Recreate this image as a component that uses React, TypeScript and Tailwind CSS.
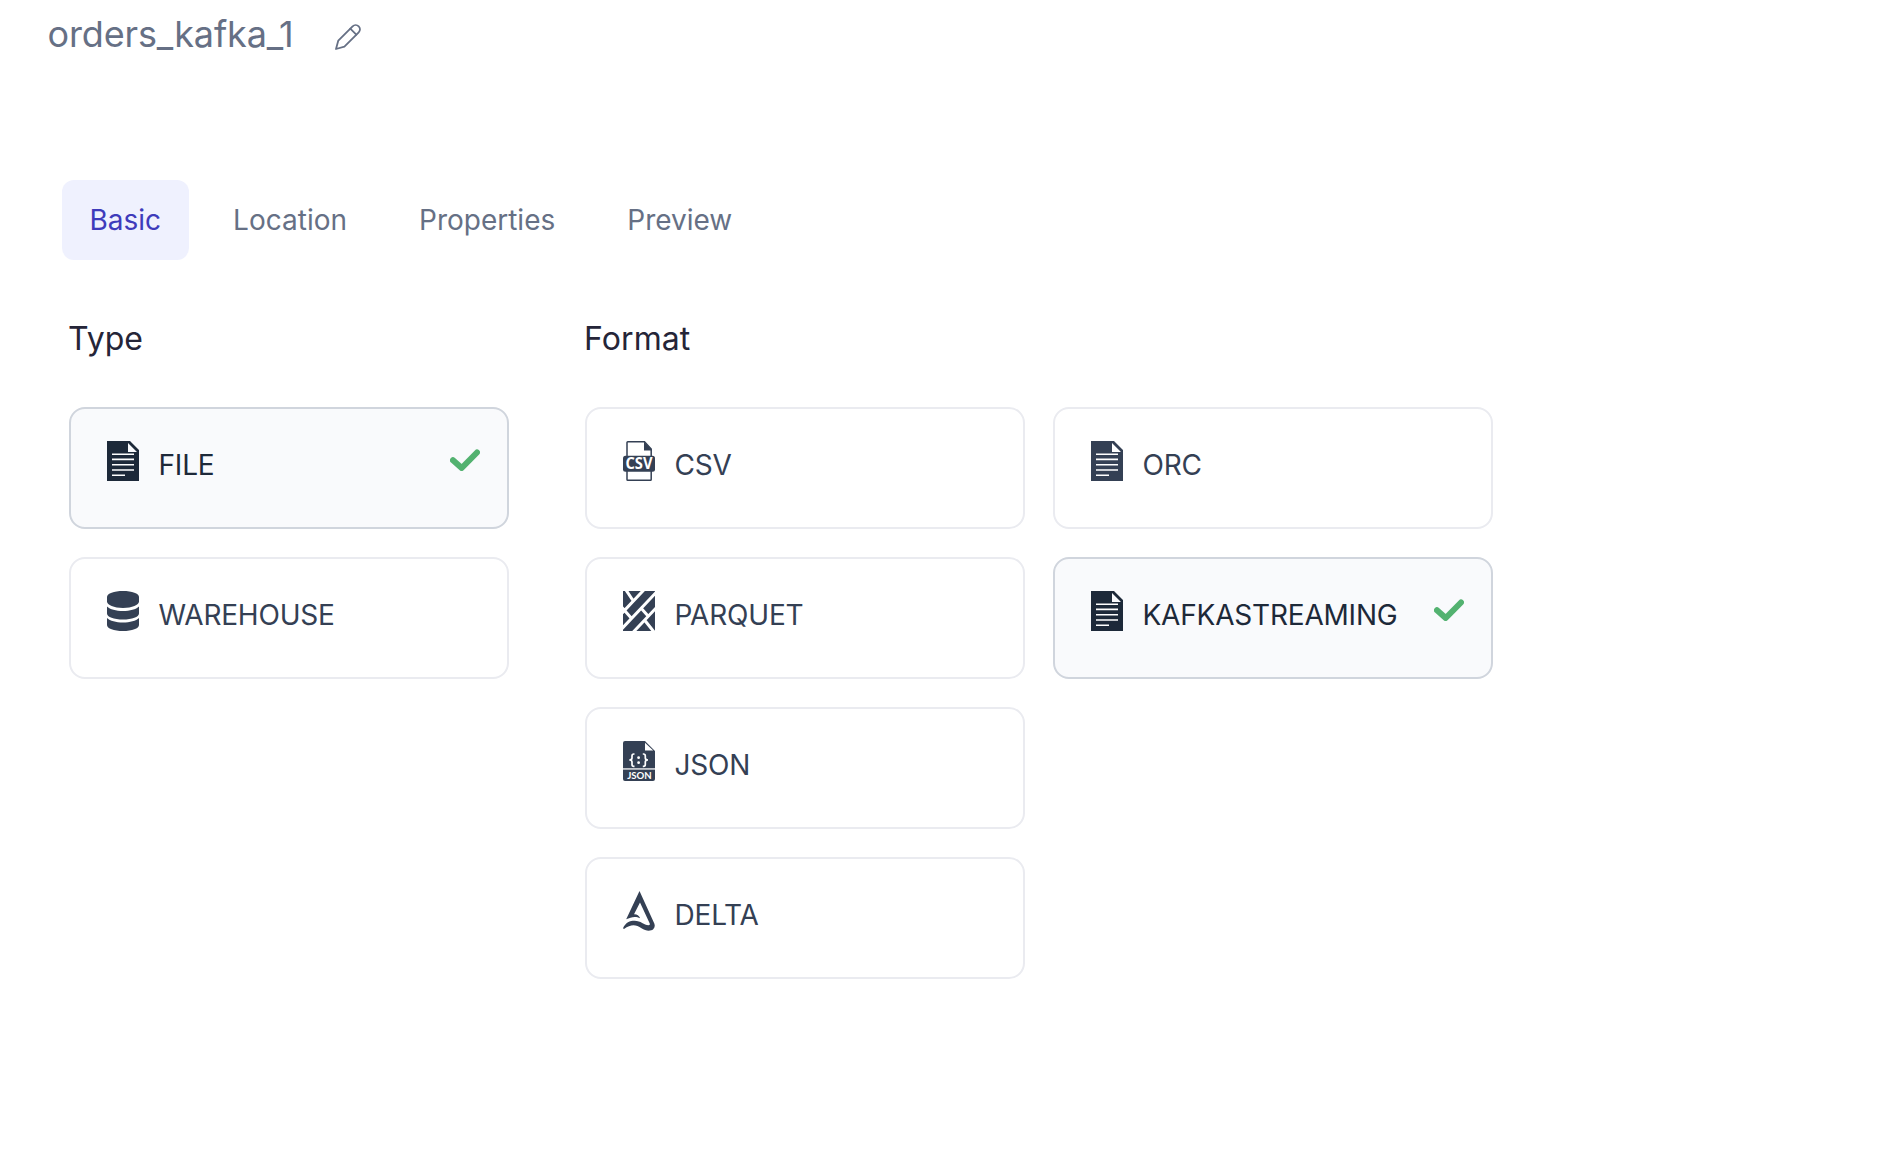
import type { ReactNode } from 'react';

function PencilIcon() {
  return (
    <svg width="26" height="26" viewBox="0 0 26 26" fill="none" stroke="#667085" strokeWidth="1.8" strokeLinejoin="round" strokeLinecap="round">
      <path d="M1 25 L3.3 16.6 L17.6 2.3 A4.3 4.3 0 0 1 23.7 8.4 L9.4 22.7 Z" />
      <path d="M15.3 4.7 L21.3 10.7" />
    </svg>
  );
}

function FileIcon() {
  return (
    <svg width="32" height="40" viewBox="0 0 32 40">
      <path fill="currentColor" fillRule="evenodd" d="M0 0H23L32 9V40H0ZM21 2V11H30Z" />
      <path stroke="#fff" strokeWidth="1.6" d="M5 13.2H27M5 18.4H27M5 23.8H27M5 29H27M5 34.2H18" />
    </svg>
  );
}

function DatabaseIcon() {
  return (
    <svg width="32" height="40" viewBox="0 0 32 40" fill="currentColor">
      <path d="M0 6C0 2.5 7 0 16 0S32 2.5 32 6V10.5C32 14 25 17 16 17S0 14 0 10.5Z" />
      <path d="M0 15.5C3 18.3 9 20 16 20S29 18.3 32 15.5V22.5C32 26 25 28.5 16 28.5S0 26 0 22.5Z" />
      <path d="M0 27C3 29.8 9 31.5 16 31.5S29 29.8 32 27V34C32 37.5 25 40 16 40S0 37.5 0 34Z" />
    </svg>
  );
}

function CsvIcon() {
  return (
    <svg width="32" height="40" viewBox="0 0 32 40">
      <path d="M4 15V1.6Q4 .8 4.8 .8H21.5L28.2 8V15M28.2 30V38.4Q28.2 39.2 27.4 39.2H4.8Q4 39.2 4 38.4V30" fill="none" stroke="currentColor" strokeWidth="1.5" />
      <path d="M21 .5V9.5H29Z" fill="currentColor" />
      <rect y="14.8" width="32" height="16" rx="2.5" fill="currentColor" />
      <text x="16" y="28.4" textAnchor="middle" textLength="27" lengthAdjust="spacingAndGlyphs" fontFamily="Open Sans" fontWeight="700" fontSize="16.5" fill="#fff">CSV</text>
    </svg>
  );
}

function ParquetIcon() {
  return (
    <svg width="32" height="40" viewBox="0 0 32 40">
      <rect width="32" height="40" fill="currentColor" />
      <path d="M22 -2.3L-2 23.1M34 .5L-2 38.6M34 16L10 41.4M3 -1L10.3 10M-1 16.5L8.6 27.4M17.5 16.5L25.5 25.5M21.5 29L31 41" fill="none" stroke="#fff" strokeWidth="3" />
    </svg>
  );
}

function JsonIcon() {
  return (
    <svg width="32" height="40" viewBox="0 0 32 40">
      <path fill="currentColor" d="M2 0H22L32 10V27H0V2Q0 0 2 0ZM0 28.8H32V38Q32 40 30 40H2Q0 40 0 38Z" />
      <path fill="#fff" d="M22 1.8V9.5H30.2Z" />
      <rect y="27" width="32" height="1.8" fill="currentColor" opacity=".3" />
      <g fill="none" stroke="#fff" strokeWidth="1.7">
        <path d="M11.5 13H10.8Q9 13 9 15V17Q9 19 6.3 19Q9 19 9 21V23.5Q9 25.3 10.8 25.3H11.5" />
        <path d="M19.8 13H20.5Q22.3 13 22.3 15V17Q22.3 19 25 19Q22.3 19 22.3 21V23.5Q22.3 25.3 20.5 25.3H19.8" />
      </g>
      <circle cx="15.6" cy="16.7" r="1.4" fill="#fff" />
      <circle cx="15.6" cy="21.7" r="1.4" fill="#fff" />
      <text x="16.4" y="37.8" textAnchor="middle" textLength="24.5" lengthAdjust="spacingAndGlyphs" fontFamily="Lato" fontWeight="700" fontSize="10" fill="#fff">JSON</text>
    </svg>
  );
}

function DeltaIcon() {
  return (
    <svg width="32" height="40" viewBox="0 0 32 40" fill="currentColor">
      <path d="M16.5 0L31.3 32.5Q32.6 36 30.2 38.2C27.5 40.5 22.5 40 18.5 37.2C13 33.5 8 33 1 38L0 37.2C2.5 31.5 7 29.7 11.5 29.7C18 29.7 20.8 34 25.5 34.2Q27.5 34 26.5 32L17 11.5L11 23.3Q15.2 23 17.2 27.3C12.5 24.8 8 26 3.2 28.2Z" />
    </svg>
  );
}

function CheckIcon() {
  return (
    <svg width="30" height="22" viewBox="0 0 30 22" fill="none" stroke="#53b270" strokeWidth="6" strokeLinecap="round" strokeLinejoin="round">
      <path d="M3 11.3L11.7 19L27 3.5" />
    </svg>
  );
}

function Card({ icon, label, selected = false }: { icon: ReactNode; label: string; selected?: boolean }) {
  return (
    <div
      className={
        'flex h-[122px] w-[440px] items-start rounded-2xl border-2 pl-9 pr-[27px] pt-8 ' +
        (selected ? 'border-[#d0d5dd] bg-[#f9fafc] text-[#1d2939]' : 'border-[#eaebf0] bg-white text-[#344054]')
      }
    >
      <span className="shrink-0">{icon}</span>
      <span className="ml-[19.5px] mt-1 whitespace-nowrap text-[28px] leading-10 tracking-[-0.2px]">{label}</span>
      {selected && (
        <span className="ml-auto mt-2">
          <CheckIcon />
        </span>
      )}
    </div>
  );
}

const tabs = ['Basic', 'Location', 'Properties', 'Preview'];

export default function App() {
  return (
    <div className="h-[1160px] w-[1900px] overflow-hidden bg-white font-['Inter',sans-serif]">
      <header className="flex items-start pl-[47.5px] pt-2.5">
        <h1 className="w-[247.5px] whitespace-nowrap text-[36px] leading-[48px] tracking-[-0.15px] text-[#667085]">orders_kafka_1</h1>
        <button className="ml-10 mt-3.5" aria-label="Edit name">
          <PencilIcon />
        </button>
      </header>

      <nav className="ml-[62px] mt-[122px] flex gap-[17px]">
        {tabs.map((tab, i) => (
          <button
            key={tab}
            className={
              'h-20 rounded-xl px-[27.5px] text-[28px] leading-10 ' + (i === 0 ? 'bg-[#eff1fe] text-[#3e3bbb]' : 'text-[#667085]')
            }
          >
            {tab}
          </button>
        ))}
      </nav>

      <main className="ml-[69px] mt-[59px] flex gap-[76px]">
        <section>
          <h2 className="-ml-px text-[32px] leading-10 text-[#252538]">Type</h2>
          <div className="mt-12 grid gap-7">
            <Card icon={<FileIcon />} label="FILE" selected />
            <Card icon={<DatabaseIcon />} label="WAREHOUSE" />
          </div>
        </section>
        <section>
          <h2 className="-ml-px text-[32px] leading-10 tracking-[0.1px] text-[#252538]">Format</h2>
          <div className="mt-12 grid grid-cols-2 gap-7">
            <Card icon={<CsvIcon />} label="CSV" />
            <Card icon={<FileIcon />} label="ORC" />
            <Card icon={<ParquetIcon />} label="PARQUET" />
            <Card icon={<FileIcon />} label="KAFKASTREAMING" selected />
            <div className="col-span-2">
              <Card icon={<JsonIcon />} label="JSON" />
            </div>
            <div className="col-span-2">
              <Card icon={<DeltaIcon />} label="DELTA" />
            </div>
          </div>
        </section>
      </main>
    </div>
  );
}
